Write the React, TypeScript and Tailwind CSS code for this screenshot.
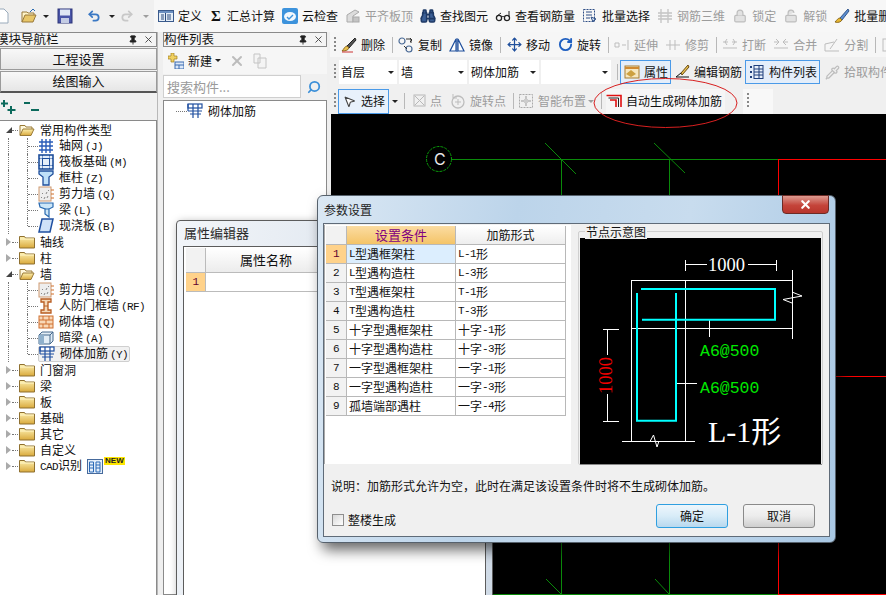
import React from "react";
import { Undo2, Redo2, Move, RotateCw, Lock, LockOpen, Search, Pipette, X, Pin, Binoculars, MousePointer2 } from "lucide-react";

const M = ({ children }: { children: React.ReactNode }) => (
  <span className="font-['Liberation_Mono'] text-[11px] tracking-[-0.6px]">{children}</span>
);

const Caret = ({ className = "" }: { className?: string }) => (
  <span className={"inline-block w-0 h-0 border-x-[3px] border-x-transparent border-t-[3px] border-t-[#222] " + className} />
);

const Grip = () => (
  <span className="w-[2px] h-[16px] mr-[-2px] shrink-0 bg-[repeating-linear-gradient(to_bottom,#888_0px,#888_2px,transparent_2px,transparent_4px)]" />
);

const Sep = () => <span className="w-px h-[16px] bg-[#b8b8b8] mr-[-2px] shrink-0" />;

const S = ({ children }: { children: React.ReactNode }) => (
  <svg width="16" height="16" viewBox="0 0 16 16" className="shrink-0" fill="none">{children}</svg>
);

const I = {
  define: <S><rect x="0.5" y="2.5" width="15" height="11" fill="#e4edf7" stroke="#3a5a8c" /><rect x="1" y="3" width="14" height="2" fill="#6b8fc0" /><path d="M3 7h3M3 9h3M3 11h3M9 7h4M9 9h4M9 11h4M7.5 5v8" stroke="#2a4a7c" /></S>,
  sigma: <S><text x="2" y="13" fontSize="15" fontWeight="700" fontFamily="Liberation Serif" fill="#111">Σ</text></S>,
  cloud: <S><rect x="0" y="0" width="16" height="16" rx="2" fill="#3d93dc" /><ellipse cx="8" cy="8.5" rx="6" ry="4.5" fill="#f2f8fd" /><path d="M5 9l2 2 4-4" stroke="#3d93dc" strokeWidth="1.4" /></S>,
  flat: <S><path d="M2 14V7l8-5 4 2-6 4v6z" fill="#dcdcdc" stroke="#aaa" /><rect x="8" y="9" width="6" height="5" fill="#c4c4c4" stroke="#aaa" /></S>,
  bino: <Binoculars size={16} strokeWidth={2.4} color="#1f3a66" fill="#3b5f96" />,
  glass: <S><circle cx="4" cy="10" r="2.6" stroke="#222" strokeWidth="1.3" /><circle cx="12" cy="10" r="2.6" stroke="#222" strokeWidth="1.3" /><path d="M6.5 9c1-.8 2-.8 3 0M14 9V3M2 8l4-3" stroke="#222" /></S>,
  batch: <S><rect x="1.5" y="1.5" width="11" height="12" stroke="#2f4f86" strokeDasharray="2 1" /><path d="M4 4h6M4 7h6M4 10h4" stroke="#2f4f86" /><path d="M9 9l5 2-2 1-1 2z" fill="#d9e7f7" stroke="#2f4f86" /></S>,
  rebar3d: <S><path d="M4 1v14M11 1v14M1 5h14M1 11h14M1 8h14" stroke="#c4c4c4" strokeWidth="1.3" /></S>,
  lock: <Lock size={14} color="#bdbdbd" fill="#e2e2e2" />,
  unlock: <LockOpen size={14} color="#bdbdbd" fill="#e2e2e2" />,
  brush: <S><path d="M14 1L6 10l2 2 7-9z" fill="#5c8fd0" stroke="#33568c" /><path d="M6 10c-2 0-3 2-5 4 3 1 6 0 7-2z" fill="#e8b830" stroke="#8c6a20" /></S>,
  del: <S><path d="M14 1L6 9l2 2 7-8z" fill="#555" stroke="#222" /><path d="M6 9c-2 0-3 3-5 5 3 0 6-.5 7-3z" fill="#e8c050" stroke="#8c6a20" /><path d="M1 15h11" stroke="#c33" /></S>,
  copy: <S><circle cx="4" cy="4" r="3" stroke="#4a6a96" strokeWidth="1.2" /><circle cx="11" cy="12" r="3" stroke="#4a6a96" strokeWidth="1.2" /><path d="M8 2h5v4M6 9l3 3M12 1l2 2-2 2" stroke="#333" /></S>,
  mirror: <S><path d="M7 2L1 14h6zM9 2l6 12H9z" stroke="#1f4f9c" strokeWidth="1.2" fill="#fff" /><path d="M8 1v14" stroke="#1f4f9c" /></S>,
  move: <Move size={15} color="#1f4f9c" strokeWidth={2} />,
  rotate: <RotateCw size={15} color="#1f5fc0" strokeWidth={3} />,
  extend: <S><path d="M1 6h4v4H1zM8 8h4M14 3v10" stroke="#bdbdbd" /></S>,
  trim: <S><path d="M1 8h14M5 3v10M10 3v10" stroke="#bdbdbd" /></S>,
  breakI: <S><path d="M1 5h5M10 5h5M1 11h14M5 2l-2 3 2 3M11 2l2 3-2 3" stroke="#bdbdbd" /></S>,
  merge: <S><path d="M1 11h14M1 5h5M10 5h5M3 2l3 3-3 3M13 2l-3 3 3 3" stroke="#bdbdbd" /></S>,
  split: <S><path d="M1 14h14M1 14V7l9-2M13 2L6 12" stroke="#bdbdbd" /></S>,
  extra: <S><rect x="2" y="2" width="12" height="12" stroke="#bdbdbd" /></S>,
  attr: <S><rect x="1" y="2" width="14" height="12" fill="#f6e7c0" stroke="#a87c30" /><path d="M2 10l5-4 5 4-5 3z" fill="#cda040" /><path d="M1 4h14" stroke="#d08a30" strokeWidth="2" /></S>,
  edit: <S><path d="M14 1L7 9l1 2 7-8z" fill="#e8c050" stroke="#6a4a10" /><path d="M7 9l-5 4h13" stroke="#111" /></S>,
  list: <S><path d="M2 2v2M2 7v2M2 12v2" stroke="#1f3f7c" strokeWidth="2" /><rect x="5" y="1.5" width="9" height="13" fill="#e7f0fa" stroke="#1f3f7c" /><path d="M5 5h9M5 8h9M5 11h9M10 2v12" stroke="#1f3f7c" /></S>,
  pick: <Pipette size={15} color="#bdbdbd" />,
  pointF: <S><rect x="2" y="2" width="11" height="11" stroke="#b8b8b8" /><path d="M3 3l9 9M12 3l-9 9" stroke="#b8b8b8" /></S>,
  rotP: <S><circle cx="8" cy="9" r="6" stroke="#bdbdbd" strokeWidth="1.3" /><path d="M8 6v6M5 9h6M3 1v4h4" stroke="#bdbdbd" /></S>,
  smart: <S><rect x="1.5" y="1.5" width="13" height="13" stroke="#aaa" strokeDasharray="2 1" /><path d="M8 3v10M3 8h10" stroke="#999" /><rect x="6" y="6" width="4" height="4" fill="#ccc" /></S>,
  auto: <S><path d="M0.5 2.5H15V14" stroke="#e01010" strokeWidth="1.6" /><path d="M2.5 5H12.5V14" stroke="#222" strokeWidth="1" /><path d="M4 7H10V14" stroke="#e01010" strokeWidth="1.6" /></S>,
};

const Tool = ({ icon, label, gray, gap = "ml-[4px]" }: { icon: React.ReactNode; label: string; gray?: boolean; gap?: string }) => (
  <span className={"flex items-center shrink-0 " + (gray ? "text-[#9c9c9c]" : "text-[#111]")}>
    <span className="w-[16px] h-[16px] flex items-center justify-center shrink-0">{icon}</span>
    <span className={gap + " whitespace-nowrap"}>{label}</span>
  </span>
);

const Fold = ({ open }: { open?: boolean }) => (
  <svg width="16" height="14" viewBox="0 0 16 14" className="shrink-0">
    <defs>
      <linearGradient id="fg" x1="0" y1="0" x2="0" y2="1"><stop offset="0" stopColor="#fdf0b0" /><stop offset="1" stopColor="#d9a93c" /></linearGradient>
    </defs>
    {open ? (
      <>
        <path d="M1 12V2.5h5l1 1.5h6v2" fill="#fff8dc" stroke="#9a7a36" />
        <path d="M1 12.5L4 6h11l-3 6.5z" fill="url(#fg)" stroke="#9a7a36" />
      </>
    ) : (
      <>
        <path d="M0.5 3V1.5h5l1 1.5h9v10H.5z" fill="url(#fg)" stroke="#8f7030" />
        <path d="M1 4h14" stroke="#fff6c8" />
      </>
    )}
  </svg>
);

const T = {
  grid: <S><path d="M1 4h14M1 8h14M1 12h14M4 1v14M8 1v14M12 1v14" stroke="#2a5cb8" strokeWidth="1.4" /></S>,
  raft: <S><rect x="1" y="1" width="14" height="14" fill="#e4eefa" stroke="#1f4f9c" strokeWidth="1.6" /><rect x="4.5" y="4.5" width="7" height="7" stroke="#1f4f9c" /><path d="M1 4.5h14M1 11.5h14M4.5 1v14M11.5 1v14" stroke="#1f4f9c" strokeDasharray="1.5 1" /></S>,
  col: <S><path d="M1 1h14v3l-4 3v8H5V7L1 4z" fill="#bfe0f8" stroke="#1f4f9c" strokeWidth="1.3" /></S>,
  shear: <S><rect x="1" y="1" width="12" height="14" fill="#eee" stroke="#d09a70" /><path d="M3 12l1-1M6 13l1-2M9 12l1-2M4 8l1-1M8 8l1-2M10 5l1-1" stroke="#888" /><path d="M13 4h3M13 8h3M13 12h3" stroke="#d0702c" /></S>,
  beam: <S><path d="M1 1h14v4l-4 2v8l-4-3V7L2 5z" fill="#cde7f8" stroke="#2a6ab0" strokeWidth="1.2" /><path d="M7 7l4 0" stroke="#2a6ab0" /></S>,
  slab: <S><path d="M4 1h11l-3 13H1z" fill="#cfe2f8" stroke="#1f4fa0" strokeWidth="1.5" /></S>,
  door: <S><path d="M3 1h10v3h-3v8h3v3H3v-3h3V4H3z" fill="#f4d8b8" stroke="#b85c20" strokeWidth="1.3" /><path d="M6 8h4" stroke="#b85c20" /></S>,
  brick: <S><rect x="1" y="2" width="14" height="12" fill="#f8d8b8" stroke="#d07030" /><path d="M1 6h14M1 10h14M5 2v4M11 2v4M8 6v4M5 10v4M11 10v4" stroke="#d07030" /></S>,
  hidden: <S><path d="M1 5l3-3h11v9l-3 3H1z" fill="#e2edf6" stroke="#44688c" /><path d="M1 5h11v9M12 5l3-3" stroke="#44688c" /><rect x="1" y="5" width="5" height="9" fill="#8fb0cc" /></S>,
  rein: <S><rect x="1" y="1" width="14" height="4" stroke="#1f4fa0" strokeWidth="1.2" fill="#fff" /><path d="M1 1v7M6 1v14M11 1v14M1 8h14M3 11h11" stroke="#1f4fa0" strokeWidth="1.2" /></S>,
};

const Arrow = ({ open }: { open?: boolean }) =>
  open ? (
    <span className="w-0 h-0 border-l-[6px] border-l-transparent border-b-[6px] border-b-[#444] shrink-0" />
  ) : (
    <span className="w-0 h-0 border-y-[4px] border-y-transparent border-l-[5px] border-l-[#aaa] shrink-0" />
  );

const Top = ({ label, open, extra }: { label: React.ReactNode; open?: boolean; extra?: React.ReactNode }) => (
  <div className="h-[16px] flex items-center pl-[6px]">
    <span className="w-[6px] flex justify-start"><Arrow open={open} /></span>
    <span className="w-[6px] border-t border-dotted border-[#777]" />
    <span className="ml-[1px]"><Fold open={open} /></span>
    <span className="ml-[5px] whitespace-nowrap">{label}</span>
    {extra}
  </div>
);

const Child = ({ icon, label, code, last, sel }: { icon: React.ReactNode; label: string; code: string; last?: boolean; sel?: boolean }) => (
  <div className="h-[16px] flex items-center pl-[8px]">
    <span className="w-px h-full border-l border-dotted border-[#777]" />
    <span className="ml-[18px] w-px h-full flex">
      <span className={"border-l border-dotted border-[#777] " + (last ? "h-1/2" : "h-full")} />
    </span>
    <span className="w-[10px] border-t border-dotted border-[#777]" />
    <span className={"flex items-center h-[16px] " + (sel ? "bg-[#f1f1f1] border border-[#cfcfcf] rounded-[2px] w-[92px]" : "")}>
      {icon}
      <span className="ml-[5px] whitespace-nowrap">{label}<span className="ml-[2px]"><M>{code}</M></span></span>
    </span>
  </div>
);

const PanelHead = ({ title }: { title: string }) => (
  <div className="h-[15px] mt-0 border border-[#8a8a8a] bg-[#f4f4f4] flex items-center justify-between overflow-hidden text-[12.5px] leading-none">
    <span className="whitespace-nowrap">{title}</span>
    <span className="flex items-center gap-[5px] pr-[2px] shrink-0">
      <Pin size={10} color="#222" fill="#222" />
      <X size={11} color="#444" />
    </span>
  </div>
);

const rows: [string, string, string][] = [
  ["", "型遇框架柱", "L-1"],
  ["", "型遇构造柱", "L-3"],
  ["", "型遇框架柱", "T-1"],
  ["", "型遇构造柱", "T-3"],
  ["十字型", "遇框架柱", "十字-1"],
  ["十字型", "遇构造柱", "十字-3"],
  ["一字型", "遇框架柱", "一字-1"],
  ["一字型", "遇构造柱", "一字-3"],
  ["孤墙端部", "遇柱", "一字-4"],
];
const latin = ["L", "L", "T", "T"];

const Cad = () => (
  <svg viewBox="331 114 555 481" className="block w-[555px] h-[481px]" fill="none">
    <circle cx="439" cy="159" r="12.5" stroke="#0a9a0a" strokeDasharray="3 1" />
    <text x="434" y="165" fontSize="16" fill="#e8e8e8" fontFamily="Inter">C</text>
    <path d="M452 159.5H778M561.5 159V200M669.5 159V200M545 143L576 174M654 143L685 173" stroke="#0a8a0a" />
    <path d="M778 159.5H886M778.5 159V200M836 376.5H886" stroke="#ff0000" />
    <path d="M561.5 540V594M669.5 540V594M546 579L561 594M655 579L669 594M493 594.5H778" stroke="#0a8a0a" />
    <path d="M778.5 540V594M778 594.5H886" stroke="#ff0000" />
  </svg>
);

const Detail = () => (
  <svg viewBox="580 238 241 226" className="block w-[241px] h-[226px] bg-black" fill="none">
    <g stroke="#fff">
      <path d="M685.5 260V271M776.5 260V271M685 264.5H707M748 264.5H777" />
      <path d="M631.5 280.5H792.5M792.5 270V339M631.5 328.5H792.5M631.5 280V441M685.5 280V441M622 441.5H695" />
      <path d="M650 441.5L653.5 435L657 447L659 441" />
      <path d="M792 292L802 296L783 299.5L792 303" />
      <path d="M709.5 320V337M677 383.5H697" />
      <path d="M607.5 329.5V355M607.5 394V421.5M603 329.5H619M603 421.5H619" />
    </g>
    <path d="M641 289H775V319.7H642" stroke="#00ffff" strokeWidth="2" />
    <path d="M637 293V420.7H676V293" stroke="#00ffff" strokeWidth="2" />
    <text x="708" y="270.5" fontSize="18.5" fill="#fff" fontFamily="Liberation Serif">1000</text>
    <text x="700" y="356" fontSize="16.5" fill="#00e800" fontFamily="Liberation Mono">A6@500</text>
    <text x="700" y="393" fontSize="16.5" fill="#00e800" fontFamily="Liberation Mono">A6@500</text>
    <text x="612" y="394" fontSize="18.5" fill="#f00000" fontFamily="Liberation Serif" transform="rotate(-90 612 394)">1000</text>
    <text x="708" y="442" fontSize="30" fill="#fff" fontFamily="Liberation Serif, Noto Sans CJK SC, serif">L-1形</text>
  </svg>
);

export default function App() {
  const font = "font-['Noto_Sans_CJK_SC','Liberation_Sans',sans-serif]";
  return (
    <div className={"relative w-[886px] h-[595px] overflow-hidden bg-[#f0f0f0] text-[12px] leading-[16px] text-[#111] flex flex-col " + font}>
      {/* main toolbar */}
      <div className="h-[32px] shrink-0 flex items-center bg-[#f0f0f0] overflow-hidden">
        <span className="w-[10px] overflow-hidden flex justify-end shrink-0">
          <svg width="16" height="16" viewBox="0 0 16 16" className="shrink-0"><path d="M2 1h8l4 4v10H2z" fill="#fff" stroke="#9ab" /></svg>
        </span>
        <svg width="16" height="16" viewBox="0 0 16 16" className="ml-[11px] shrink-0"><path d="M1 14V4h5l1 1h6v2" fill="#fff4c8" stroke="#98783a" /><path d="M1 14l3-7h11l-3 7z" fill="#e8c668" stroke="#98783a" /><path d="M9 4l3-3 2 2" stroke="#2a6ab0" fill="none" /></svg>
        <Caret className="ml-[6px]" />
        <svg width="16" height="16" viewBox="0 0 16 16" className="ml-[8px] shrink-0"><rect x="1" y="1" width="14" height="14" fill="#4a55a8" stroke="#2c3578" /><rect x="3" y="1.5" width="10" height="6" fill="#dfe6f4" /><rect x="4" y="10" width="8" height="5" fill="#c4cce4" /></svg>
        <span className="w-px h-[26px] bg-[#bcbcbc] ml-[6px]" />
        <Undo2 size={14} color="#3a78c4" strokeWidth={3} className="ml-[8px] shrink-0" />
        <Caret className="ml-[8px]" />
        <Redo2 size={14} color="#c8c8c8" strokeWidth={3} className="ml-[5px] shrink-0" />
        <Caret className="ml-[9px] opacity-40" />
        <div className="ml-[5px] h-full flex items-center gap-[7px] bg-[#f7f7f7] pl-[4px] grow">
          <Tool icon={I.define} label="定义" />
          <Tool icon={I.sigma} label="汇总计算" gap="ml-[2px]" />
          <Tool icon={I.cloud} label="云检查" />
          <Tool icon={I.flat} label="平齐板顶" gray />
          <Tool icon={I.bino} label="查找图元" />
          <Tool icon={I.glass} label="查看钢筋量" />
          <Tool icon={I.batch} label="批量选择" />
          <Tool icon={I.rebar3d} label="钢筋三维" gray />
          <Tool icon={I.lock} label="锁定" gray />
          <Tool icon={I.unlock} label="解锁" gray />
          <Tool icon={I.brush} label="批量删除" />
        </div>
      </div>

      <div className="flex-1 flex min-h-0">
        {/* navigator */}
        <div className="w-[157px] shrink-0 flex flex-col overflow-hidden">
          <div className="ml-[-5px]"><PanelHead title="模块导航栏" /></div>
          <div className="mt-[1px] h-[22px] shrink-0 border border-[#9a9a9a] bg-[linear-gradient(#f8f8f8,#e6e6e6)] flex items-center justify-center text-[13px]">工程设置</div>
          <div className="mt-[1px] h-[22px] shrink-0 border border-[#9a9a9a] border-b-2 border-b-[#555] bg-[linear-gradient(#f8f8f8,#e6e6e6)] flex items-center justify-center text-[13px] pb-[1px]">绘图输入</div>
          <div className="h-[27px] shrink-0 flex items-center">
            <svg width="42" height="16" viewBox="0 0 42 16" fill="none"><path d="M4 1v7M1 4.5h7M11 7v8M7.5 11h8" stroke="#0c6a5c" strokeWidth="2" /><path d="M24 4h6M31 11h8" stroke="#0c6a5c" strokeWidth="2" /></svg>
          </div>
          <div className="flex-1 bg-white border-t border-r border-[#8a8a8a] pt-[1px] overflow-hidden">
            <Top open label="常用构件类型" />
            <Child icon={T.grid} label="轴网" code="(J)" />
            <Child icon={T.raft} label="筏板基础" code="(M)" />
            <Child icon={T.col} label="框柱" code="(Z)" />
            <Child icon={T.shear} label="剪力墙" code="(Q)" />
            <Child icon={T.beam} label="梁" code="(L)" />
            <Child icon={T.slab} label="现浇板" code="(B)" last />
            <Top label="轴线" />
            <Top label="柱" />
            <Top open label="墙" />
            <Child icon={T.shear} label="剪力墙" code="(Q)" />
            <Child icon={T.door} label="人防门框墙" code="(RF)" />
            <Child icon={T.brick} label="砌体墙" code="(Q)" />
            <Child icon={T.hidden} label="暗梁" code="(A)" />
            <Child icon={T.rein} label="砌体加筋" code="(Y)" last sel />
            <Top label="门窗洞" />
            <Top label="梁" />
            <Top label="板" />
            <Top label="基础" />
            <Top label="其它" />
            <Top label="自定义" />
            <Top
              label={<><M>CAD</M>识别</>}
              extra={
                <span className="ml-[5px] flex items-start shrink-0">
                  <svg width="16" height="15" viewBox="0 0 16 15" fill="none"><rect x="0.5" y="0.5" width="15" height="14" fill="#e4eefa" stroke="#466a9c" /><path d="M2.5 3h4v10h-4zM9 3h4v10H9zM2.5 6h4M2.5 9h4M9 6h4M9 9h4" stroke="#2a6ab8" /></svg>
                  <span className="ml-[1px] mt-[-2px] px-[1px] bg-[#ffe600] text-[#222] font-['Liberation_Sans'] font-bold text-[8px] leading-[8px]">NEW</span>
                </span>
              }
            />
          </div>
        </div>

        <div className="w-[6px] shrink-0 bg-[#efefef] border-l border-[#b8b8b8]" />

        {/* component list */}
        <div className="w-[164px] shrink-0 flex flex-col">
          <PanelHead title="构件列表" />
          <div className="h-[27px] shrink-0 flex items-center bg-[#f6f6f6] pl-[5px]">
            <svg width="16" height="16" viewBox="0 0 16 16" fill="none"><path d="M3 0h3v3h3v3H6v3H3V6H0V3h3z" fill="#f0d060" stroke="#a08020" strokeWidth=".7" /><rect x="7" y="9" width="9" height="7" fill="#dce8f8" stroke="#3a6ab0" /><path d="M7 12h9M11 12v4" stroke="#3a6ab0" /></svg>
            <span className="ml-[4px]">新建</span>
            <Caret className="ml-[3px]" />
            <X size={16} color="#bcbcbc" strokeWidth={3} className="ml-[8px]" />
            <svg width="16" height="16" viewBox="0 0 16 16" className="ml-[7px]" fill="none"><path d="M2 1h6v9H2zM6 5h8v10H6z" fill="#f4f4f4" stroke="#c4c4c4" /></svg>
          </div>
          <div className="h-[25px] shrink-0 flex items-center">
            <div className="w-[138px] h-[23px] bg-white border border-[#cfcfcf] text-[#9a9a9a] pl-[3px] flex items-center text-[13px]">搜索构件...</div>
            <Search size={14} color="#3b8fd8" strokeWidth={3} className="ml-[6px] scale-x-[-1]" />
          </div>
          <div className="flex-1 mt-[1px] bg-white border border-[#8a8a8a] pt-[2px]">
            <div className="h-[16px] flex items-center pl-[12px]">
              <span className="w-[11px] border-t border-dotted border-[#777]" />
              {T.rein}
              <span className="ml-[5px]">砌体加筋</span>
            </div>
          </div>
        </div>

        <div className="w-[3px] shrink-0 bg-[#efefef]" />

        {/* right side */}
        <div className="flex-1 flex flex-col min-w-0 overflow-hidden">
          <div className="h-[25px] shrink-0 flex items-center gap-[7px] pl-[4px] bg-[#f6f6f6]">
            <Grip />
            <Tool icon={I.del} label="删除" />
            <Sep />
            <Tool icon={I.copy} label="复制" />
            <Tool icon={I.mirror} label="镜像" />
            <Sep />
            <Tool icon={I.move} label="移动" />
            <Tool icon={I.rotate} label="旋转" />
            <Sep />
            <Tool icon={I.extend} label="延伸" gray />
            <Tool icon={I.trim} label="修剪" gray />
            <Sep />
            <Tool icon={I.breakI} label="打断" gray />
            <Tool icon={I.merge} label="合并" gray />
            <Tool icon={I.split} label="分割" gray />
            <Sep />
            {I.extra}
          </div>
          <div className="h-[28px] shrink-0 flex items-center pl-[4px] pt-[3px] pb-px bg-[#f0f0f0]">
            <Grip />
            <span className="ml-[5px] w-[58px] h-[24px] bg-white flex items-center pl-[2px] shrink-0">首层<Caret className="ml-auto mr-[3px]" /></span>
            <span className="ml-[2px] w-[68px] h-[24px] bg-white flex items-center pl-[2px] shrink-0">墙<Caret className="ml-auto mr-[3px]" /></span>
            <span className="ml-[2px] w-[70px] h-[24px] bg-white flex items-center pl-[2px] shrink-0">砌体加筋<Caret className="ml-auto mr-[3px]" /></span>
            <span className="ml-[2px] w-[70px] h-[24px] bg-white flex items-center pl-[2px] shrink-0"><Caret className="ml-auto mr-[3px]" /></span>
            <span className="ml-[6px] w-px h-[16px] bg-[#b8b8b8] shrink-0" />
            <span className="ml-[2px] w-[51px] h-[24px] border border-[#4a9ae8] bg-[#e4eefa] flex items-center pl-[3px] shrink-0"><Tool icon={I.attr} label="属性" /></span>
            <span className="ml-[3px]"><Tool icon={I.edit} label="编辑钢筋" /></span>
            <span className="ml-[3px] w-[75px] h-[24px] border border-[#4a9ae8] bg-[#e4eefa] flex items-center pl-[3px] shrink-0"><Tool icon={I.list} label="构件列表" /></span>
            <span className="ml-[4px]"><Tool icon={I.pick} label="拾取构件" gray /></span>
          </div>
          <div className="h-[29px] shrink-0 flex items-center pl-[4px] bg-[#f0f0f0] pt-[3px]">
            <Grip />
            <span className="ml-[4px] w-[51px] h-[25px] border border-[#4a9ae8] bg-[#e8f1fb] flex items-center pl-[4px] shrink-0">
              <MousePointer2 size={13} color="#444" fill="#fff" className="shrink-0" />
              <span className="ml-[5px]">选择</span>
            </span>
            <Caret className="ml-[3px]" />
            <span className="ml-[6px] w-px h-[16px] bg-[#b8b8b8] shrink-0" />
            <span className="ml-[7px]"><Tool icon={I.pointF} label="点" gray gap="ml-[2px]" /></span>
            <span className="ml-[8px]"><Tool icon={I.rotP} label="旋转点" gray /></span>
            <span className="ml-[7px] w-px h-[16px] bg-[#b8b8b8] shrink-0" />
            <span className="ml-[4px]"><Tool icon={I.smart} label="智能布置" gray /></span>
            <Caret className="ml-[2px] opacity-40" />
            <span className="ml-[7px] w-px h-[16px] bg-[#b8b8b8] shrink-0" />
            <span className="ml-[4px] h-[25px] pr-[3px] bg-[#f6f6f6] flex items-center shrink-0"><Tool icon={I.auto} label="自动生成砌体加筋" gap="ml-[4px]" /></span>
            <span className="ml-[18px] h-[25px] w-[30px] bg-[#f8f8f8] flex items-center pl-[4px] shrink-0"><Grip /></span>
          </div>
          <div className="flex-1 bg-black ml-[1px] min-h-0"><Cad /></div>
        </div>
      </div>

      {/* attribute editor window */}
      <div className="absolute left-[176px] top-[220px] w-[317px] h-[400px] rounded-t-[4px] border border-[#5c5c5c] bg-[linear-gradient(100deg,#f2f5f9,#cfdae6)] shadow-[2px_2px_8px_rgba(0,0,0,0.35)] flex flex-col px-[6px]">
        <div className="h-[25px] shrink-0 flex items-center pl-[1px] pb-[2px] text-[13px] text-[#2a2a2a]">属性编辑器</div>
        <div className="flex-1 bg-white border border-[#5c5c5c] pt-[1px] pl-[2px]">
          <div className="flex h-[25px] border-b border-[#bbb]">
            <div className="w-[20px] bg-[#f2f2f2] border-r border-[#bbb]" />
            <div className="w-[120px] bg-[linear-gradient(#fff,#ececec)] flex items-center justify-center text-[13px]">属性名称</div>
            <div className="flex-1 bg-[#f2f2f2]" />
          </div>
          <div className="flex h-[19px] border-b border-[#bbb]">
            <div className="w-[20px] bg-[#ffd28a] border-r border-[#bbb] flex items-center justify-center text-[#600030]"><M>1</M></div>
            <div className="flex-1" />
          </div>
        </div>
      </div>

      {/* annotation ellipse */}
      <svg className="absolute left-[590px] top-[74px] w-[152px] h-[58px]" viewBox="590 74 152 58" fill="none">
        <ellipse cx="665.5" cy="103" rx="71.5" ry="24.5" stroke="#d82020" />
      </svg>

      {/* parameters dialog */}
      <div className="absolute left-[317px] top-[195px] w-[519px] h-[348px] rounded-[6px] border border-[#56616c] shadow-[5px_7px_14px_rgba(0,0,0,0.6)] flex flex-col px-[5px] pb-[5px] bg-[linear-gradient(100deg,#dbe8f4_0%,#bcd4ea_35%,#c8dcee_65%,#a9c8e4_100%)]">
        <div className="h-[27px] shrink-0 flex items-center pl-[1px] relative text-[#222]">
          参数设置
          <span className="absolute right-[1px] top-[-1px] w-[47px] h-[19px] rounded-b-[4px] border border-[#6c2b26] bg-[linear-gradient(#dd9a90,#c4443a_55%,#b8352c)] flex items-center justify-center">
            <X size={13} color="#fff" strokeWidth={4} />
          </span>
        </div>
        <div className="flex-1 bg-[#f0f0f0] border border-[#5f6b78] flex flex-col min-h-0">
          <div className="flex h-[241px] shrink-0">
            <div className="w-[247px] h-[239px] mt-px bg-white border-l border-[#aaa] pt-[1px] pl-[1px] shrink-0">
              <div className="flex h-[19px] w-[240px] border-b border-[#b8b8b8]">
                <div className="w-[21px] bg-[#f2f2f2] border-r border-[#b8b8b8]" />
                <div className="w-[109px] bg-[linear-gradient(#fbdca2,#f4c468)] border-r border-[#b8b8b8] flex items-center justify-center text-[#800080] text-[13px]">设置条件</div>
                <div className="flex-1 bg-[linear-gradient(#fff,#eee)] border-r border-[#b8b8b8] flex items-center justify-center">加筋形式</div>
              </div>
              {rows.map((r, i) => (
                <div key={i} className="flex h-[19px] w-[240px] border-b border-[#b8b8b8]">
                  <div className={"w-[21px] border-r border-[#b8b8b8] flex items-center justify-center " + (i === 0 ? "bg-[#ffd28a] text-[#600030]" : "bg-[#f2f2f2]")}><M>{i + 1}</M></div>
                  <div className={"w-[109px] border-r border-[#b8b8b8] flex items-center pl-[2px] whitespace-nowrap " + (i === 0 ? "bg-[#dceefe]" : "")}>
                    {i < 4 ? <M>{latin[i]}</M> : null}{r[0]}{r[1]}
                  </div>
                  <div className="flex-1 border-r border-[#b8b8b8] flex items-center pl-[2px] whitespace-nowrap">
                    {i < 4 ? <M>{r[2]}</M> : <>{r[2].slice(0, 2)}<M>{r[2].slice(2)}</M></>}形
                  </div>
                </div>
              ))}
            </div>
            <div className="ml-[7px] mt-[7px] w-[245px] h-[234px] relative border border-[#cfcfcf] rounded-[2px] pl-[1px] pt-[6px]">
              <span className="absolute left-[6px] top-[-7px] px-[1px] bg-[#f0f0f0] leading-[14px] whitespace-nowrap">节点示意图</span>
              <div className="border-b border-[#888]"><Detail /></div>
            </div>
          </div>
          <div className="ml-[7px] mt-[13px] h-[16px] whitespace-nowrap">说明：加筋形式允许为空，此时在满足该设置条件时将不生成砌体加筋。</div>
          <div className="flex items-center ml-[8px] mt-[10px]">
            <span className="flex items-center mt-[7px]">
              <span className="w-[12px] h-[12px] border border-[#8e8e8e] bg-[linear-gradient(135deg,#d8d8d8,#fff)]" />
              <span className="ml-[4px]">整楼生成</span>
            </span>
            <span className="ml-auto w-[72px] h-[24px] rounded-[3px] border border-[#2f9fe0] bg-[linear-gradient(#eef6fc_0%,#d8ecf8_50%,#b8d8ee_100%)] flex items-center justify-center">确定</span>
            <span className="ml-[15px] mr-[14px] w-[72px] h-[24px] rounded-[3px] border border-[#8a8a8a] bg-[linear-gradient(#f6f6f6_0%,#ececec_50%,#cfcfcf_100%)] flex items-center justify-center">取消</span>
          </div>
        </div>
      </div>
    </div>
  );
}
